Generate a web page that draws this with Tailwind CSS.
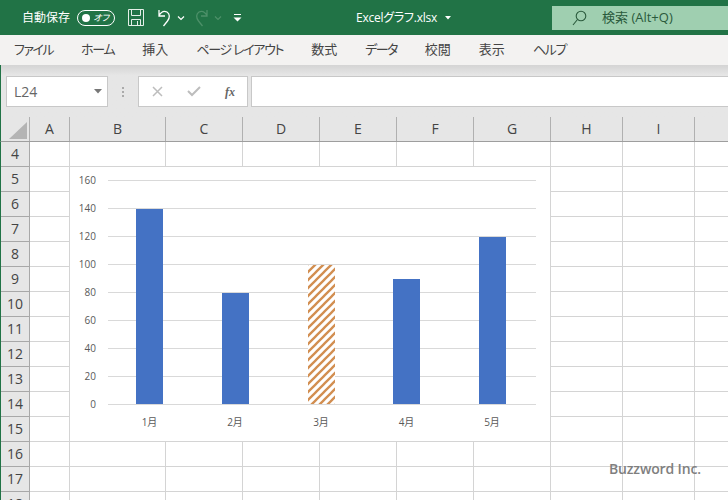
<!DOCTYPE html>
<html lang="ja">
<head>
<meta charset="utf-8">
<script src="https://cdn.jsdelivr.net/npm/@tailwindcss/browser@4"></script>
</head>
<body class="w-[728px] h-[500px] overflow-hidden bg-white font-['Open_Sans','Noto_Sans_CJK_JP',sans-serif] relative">
<!-- title bar -->
<div class="h-[35px] bg-[#217346] flex items-center text-white relative">
  <span class="ml-[22px] text-[12px] w-[50px] whitespace-nowrap [font-feature-settings:'palt']">自動保存</span>
  <div class="ml-[5px] w-[38px] h-[16px] rounded-full border border-white flex items-center justify-between pl-[4px] pr-[5px]">
    <span class="w-[8px] h-[8px] rounded-full bg-white"></span>
    <span class="text-[9px] italic leading-none [font-feature-settings:'palt']">オフ</span>
  </div>
  <svg class="ml-[13px]" width="16" height="17" viewBox="0 0 16 17" fill="none" stroke="#e4efe8" stroke-width="1"><path d="M.5.500h15v16h-15z"/><path d="M3.500.500v6h9v-6M3.500 16.500v-6h9v6M9.500 12v4.500"/></svg>
  <svg class="ml-[11px]" width="20" height="20" viewBox="0 0 20 20" fill="none" stroke="#fff" stroke-width="1.300"><path d="M4 2v6h6M4 7.500c2-3.500 5-5 8-3.500 3 1.800 3 6 .5 9l-4 5"/></svg>
  <svg class="ml-[2px]" width="8" height="6" viewBox="0 0 8 6" fill="none" stroke="#fff" stroke-width="1.200"><path d="M1 1.500l3 3 3-3"/></svg>
  <svg class="ml-[6px]" width="20" height="20" viewBox="0 0 20 20" fill="none" stroke="#4d9069" stroke-width="1.300"><path d="M16 2v6h-6M16 7.500c-2-3.500-5-5-8-3.500-3 1.800-3 6-.5 9l4 5"/></svg>
  <svg class="ml-[3px]" width="8" height="6" viewBox="0 0 8 6" fill="none" stroke="#4d9069" stroke-width="1.200"><path d="M1 1.500l3 3 3-3"/></svg>
  <svg class="ml-[11px]" width="9" height="8" viewBox="0 0 9 8" fill="#fff"><path d="M1 0h7v1h-7z"/><path d="M.5 3.500h8l-4 4z"/></svg>
  <span class="absolute left-[356px] top-[9px] text-[12px] leading-[18px] tracking-[-0.25px] whitespace-nowrap [font-feature-settings:'palt']">Excelグラフ.xlsx</span>
  <svg class="absolute left-[445px] top-[16px]" width="6" height="4" viewBox="0 0 6 4" fill="#fff"><path d="M0 0h6l-3 3.500z"/></svg>
  <div class="absolute left-[552px] top-[6px] w-[176px] h-[24px] bg-[#9fcfb0] flex items-center text-[#2a5a3c]">
    <svg class="ml-[20px]" width="15" height="16" viewBox="0 0 15 16" fill="none" stroke="#2a5a3c" stroke-width="1.100"><circle cx="9" cy="6" r="4.800"/><path d="M5.500 9.500l-4.500 5.500"/></svg>
    <span class="ml-[15px] text-[13px] whitespace-nowrap">検索 (Alt+Q)</span>
  </div>
</div>
<!-- ribbon tabs -->
<div class="h-[30px] bg-[#f3f2f1] flex items-center pl-[14px] gap-[28px] text-[13px] text-[#444] whitespace-nowrap [font-feature-settings:'palt']">
  <span class="tracking-[-1.500px]">ファイル</span><span class="tracking-[-1.300px]">ホーム</span><span>挿入</span><span class="tracking-[-1.300px]">ページ レイアウト</span><span>数式</span><span class="tracking-[-1.600px]">データ</span><span>校閲</span><span>表示</span><span class="tracking-[-1.300px]">ヘルプ</span>
</div>
<!-- formula bar -->
<div class="h-[52px] bg-gradient-to-b from-[#d4d4d4] to-[#e6e6e6] to-[20%] flex items-start pt-[11px] pl-[6px] border-l border-[#217346]">
  <div class="-ml-[1px] w-[102px] h-[31px] bg-white border border-[#c8c8c8] flex items-center justify-between pl-[7px] pr-[5px] text-[14px] text-[#666]">
    <span>L24</span>
    <svg width="8" height="5" viewBox="0 0 8 5" fill="#777"><path d="M0 0h8l-4 4.500z"/></svg>
  </div>
  <div class="w-[30px] h-[31px] flex flex-col items-center justify-center gap-[2px]">
    <span class="w-[2px] h-[2px] bg-[#aaa]"></span><span class="w-[2px] h-[2px] bg-[#aaa]"></span><span class="w-[2px] h-[2px] bg-[#aaa]"></span>
  </div>
  <div class="w-[110px] h-[31px] bg-white border border-[#c8c8c8] flex items-center">
    <svg class="ml-[13px]" width="11" height="11" viewBox="0 0 11 11" stroke="#bdbdbd" stroke-width="1.500" fill="none"><path d="M1 1l9 9M10 1l-9 9"/></svg>
    <svg class="ml-[24px]" width="14" height="11" viewBox="0 0 14 11" stroke="#bdbdbd" stroke-width="2" fill="none"><path d="M1 5l4 4 8-8"/></svg>
    <span class="ml-[24px] text-[12px] italic font-bold text-[#666] font-['Liberation_Serif',serif]">fx</span>
  </div>
  <div class="ml-[3px] flex-1 h-[31px] bg-white border-y border-l border-[#c8c8c8]"></div>
</div>
<!-- column headers -->
<div class="relative h-[24px] bg-[#e6e6e6] border-l border-[#217346] text-[14px] text-[#444] border-b border-b-[#9e9e9e] box-content">
  <div class="grid grid-cols-[29px_40px_96px_77px_77px_77px_77px_77px_72px_72px_34px] h-full text-center leading-[24px] [&>div]:border-r [&>div]:border-[#b0b0b0] [&>div:last-child]:border-r-0">
    <div class="relative"><svg class="absolute left-[8px] top-[5px]" width="18" height="17" viewBox="0 0 18 17" fill="#b4b4b4"><path d="M18 0v17h-18z"/></svg></div>
    <div>A</div><div>B</div><div>C</div><div>D</div><div>E</div><div>F</div><div>G</div><div>H</div><div>I</div><div></div>
  </div>
</div>
<!-- sheet rows -->
<div class="border-l border-[#217346] text-[14px] text-[#444] [&>div]:grid [&>div]:grid-cols-[29px_40px_96px_77px_77px_77px_77px_77px_72px_72px_34px] [&>div]:h-[25px] [&>div>div]:border-r [&>div>div]:border-b [&>div>div]:border-[#d4d4d4] [&>div>div:first-child]:bg-[#e6e6e6] [&>div>div:first-child]:border-[#a8a8a8] [&>div>div:first-child]:text-center [&>div>div:first-child]:leading-[24px]">
  <div><div>4</div><div></div><div></div><div></div><div></div><div></div><div></div><div></div><div></div><div></div><div></div></div>
  <div><div>5</div><div></div><div></div><div></div><div></div><div></div><div></div><div></div><div></div><div></div><div></div></div>
  <div><div>6</div><div></div><div></div><div></div><div></div><div></div><div></div><div></div><div></div><div></div><div></div></div>
  <div><div>7</div><div></div><div></div><div></div><div></div><div></div><div></div><div></div><div></div><div></div><div></div></div>
  <div><div>8</div><div></div><div></div><div></div><div></div><div></div><div></div><div></div><div></div><div></div><div></div></div>
  <div><div>9</div><div></div><div></div><div></div><div></div><div></div><div></div><div></div><div></div><div></div><div></div></div>
  <div><div>10</div><div></div><div></div><div></div><div></div><div></div><div></div><div></div><div></div><div></div><div></div></div>
  <div><div>11</div><div></div><div></div><div></div><div></div><div></div><div></div><div></div><div></div><div></div><div></div></div>
  <div><div>12</div><div></div><div></div><div></div><div></div><div></div><div></div><div></div><div></div><div></div><div></div></div>
  <div><div>13</div><div></div><div></div><div></div><div></div><div></div><div></div><div></div><div></div><div></div><div></div></div>
  <div><div>14</div><div></div><div></div><div></div><div></div><div></div><div></div><div></div><div></div><div></div><div></div></div>
  <div><div>15</div><div></div><div></div><div></div><div></div><div></div><div></div><div></div><div></div><div></div><div></div></div>
  <div><div>16</div><div></div><div></div><div></div><div></div><div></div><div></div><div></div><div></div><div></div><div></div></div>
  <div><div>17</div><div></div><div></div><div></div><div></div><div></div><div></div><div></div><div></div><div></div><div></div></div>
  <div><div>18</div><div></div><div></div><div></div><div></div><div></div><div></div><div></div><div></div><div></div><div></div></div>
</div>
<!-- chart overlay -->
<svg class="absolute left-[70px] top-[167px]" width="480" height="274" viewBox="70 167 480 274" font-size="10" fill="#595959">
  <defs>
    <pattern id="hatch" width="8" height="8" patternUnits="userSpaceOnUse" patternTransform="translate(308 264)">
      <rect width="8" height="8" fill="#fff"/>
      <path d="M-2 10L10 -2M-2 2L2 -2M6 10L10 6" stroke="#d28e50" stroke-width="2.300"/>
    </pattern>
  </defs>
  <rect x="70" y="167" width="480" height="274" fill="#fff"/>
  <g stroke="#d9d9d9" stroke-width="1">
    <path d="M108 180.500H536M108 208.500H536M108 236.500H536M108 264.500H536M108 292.500H536M108 320.500H536M108 348.500H536M108 376.500H536M108 404.500H536"/>
  </g>
  <rect x="136" y="209" width="27" height="195" fill="#4472c4"/>
  <rect x="222" y="293" width="27" height="111" fill="#4472c4"/>
  <rect x="308" y="265" width="27" height="139" fill="url(#hatch)"/>
  <rect x="393" y="279" width="27" height="125" fill="#4472c4"/>
  <rect x="479" y="237" width="27" height="167" fill="#4472c4"/>
  <g text-anchor="end">
    <text x="96" y="184">160</text><text x="96" y="212">140</text><text x="96" y="240">120</text><text x="96" y="268">100</text><text x="96" y="296">80</text><text x="96" y="324">60</text><text x="96" y="352">40</text><text x="96" y="380">20</text><text x="96" y="408">0</text>
  </g>
  <g text-anchor="middle">
    <text x="149.500" y="426">1月</text><text x="235" y="426">2月</text><text x="321" y="426">3月</text><text x="406.500" y="426">4月</text><text x="492" y="426">5月</text>
  </g>
</svg>
<span class="absolute left-[609px] top-[459px] text-[14px] leading-[20px] tracking-[-0.15px] text-[#7f7f7f] font-semibold whitespace-nowrap">Buzzword Inc.</span>
</body>
</html>
